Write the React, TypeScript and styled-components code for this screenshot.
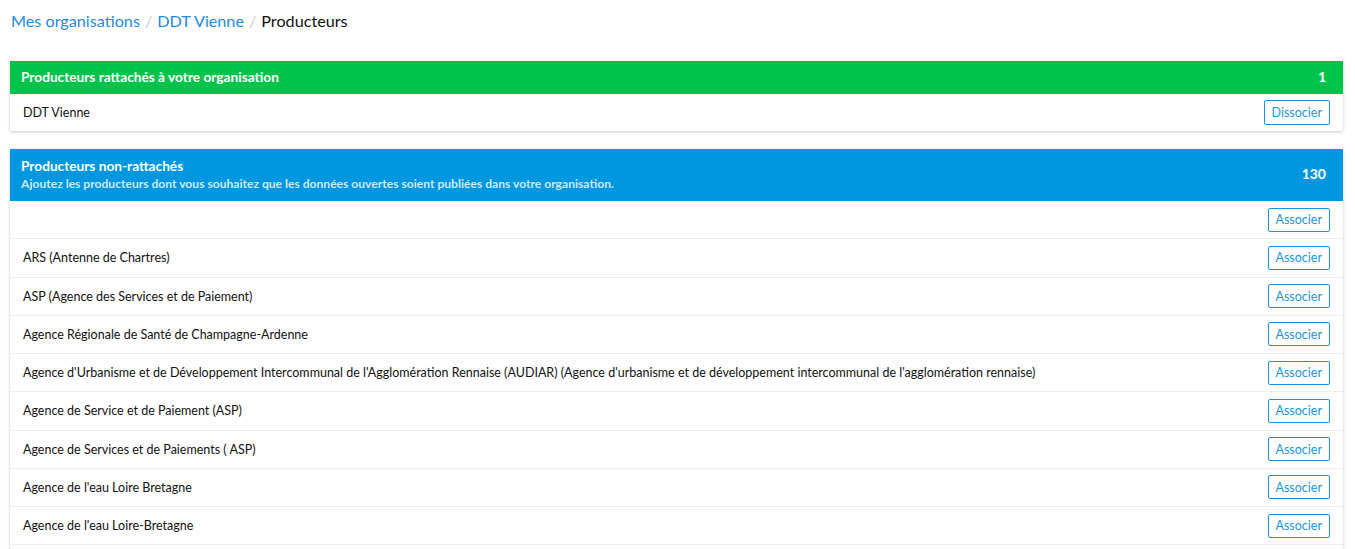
import React from "react";
import styled, { createGlobalStyle } from "styled-components";

const Global = createGlobalStyle`
  html, body { margin: 0; padding: 0; background: #fff; }
  body { font-family: Lato, "Open Sans", "Liberation Sans", sans-serif; color: #111; }
  * { box-sizing: border-box; }
`;

const Page = styled.div`
  padding: 10px 12px 0 10px;
`;

const Crumbs = styled.nav`
  display: flex;
  align-items: center;
  font-size: 16.2px;
  height: 21px;
  padding-left: 1px;
  margin-bottom: 30px;
`;

const CrumbLink = styled.a`
  color: #1f8ae0;
  text-decoration: none;
`;

const Sep = styled.span`
  color: #ccc;
  padding: 0 5px;
`;

const Current = styled.span`
  color: #111;
`;

const Panel = styled.section`
  background: #fff;
  box-shadow: 0 1px 3px rgba(0, 0, 0, 0.22);
  margin-bottom: 18px;
`;

const Header = styled.header<{ $bg: string; $tall?: boolean }>`
  background: ${(p) => p.$bg};
  color: #fff;
  display: flex;
  align-items: center;
  justify-content: space-between;
  padding: 0 17px 3px 11px;
  height: ${(p) => (p.$tall ? "52px" : "33px")};
`;

const HeadText = styled.div`
  display: flex;
  flex-direction: column;
  gap: 3px;
`;

const Title = styled.div`
  font-weight: 700;
  font-size: 13.7px;
  line-height: 17px;
`;

const Sub = styled.div`
  font-weight: 700;
  font-size: 12.1px;
  line-height: 14px;
  color: rgba(255, 255, 255, 0.82);
`;

const Count = styled.div`
  font-weight: 700;
  font-size: 14px;
`;

const Row = styled.div<{ $h: number }>`
  display: flex;
  align-items: center;
  justify-content: space-between;
  height: ${(p) => p.$h}px;
  padding: 0 13px;
  font-size: 12.5px;
  border-bottom: 1px solid #eee;
  &:last-child { border-bottom: none; }
`;

const Btn = styled.button<{ $tall?: boolean }>`
  font-family: inherit;
  font-size: 12.5px;
  color: #1a95dc;
  background: #fff;
  border: 1px solid #1a95dc;
  border-radius: 2px;
  height: ${(p) => (p.$tall ? "25px" : "24px")};
  padding: 0 7px;
  cursor: pointer;
`;

const names = [
  "",
  "ARS (Antenne de Chartres)",
  "ASP (Agence des Services et de Paiement)",
  "Agence Régionale de Santé de Champagne-Ardenne",
  "Agence d'Urbanisme et de Développement Intercommunal de l'Agglomération Rennaise (AUDIAR) (Agence d'urbanisme et de développement intercommunal de l'agglomération rennaise)",
  "Agence de Service et de Paiement (ASP)",
  "Agence de Services et de Paiements ( ASP)",
  "Agence de l'eau Loire Bretagne",
  "Agence de l'eau Loire-Bretagne",
  "Agence de l'eau Seine-Normandie",
];

export default function App() {
  return (
    <>
      <Global />
      <Page>
        <Crumbs>
          <CrumbLink href="#">Mes organisations</CrumbLink>
          <Sep>/</Sep>
          <CrumbLink href="#">DDT Vienne</CrumbLink>
          <Sep>/</Sep>
          <Current>Producteurs</Current>
        </Crumbs>

        <Panel>
          <Header $bg="#00c34a">
            <Title>Producteurs rattachés à votre organisation</Title>
            <Count>1</Count>
          </Header>
          <Row $h={37}>
            <span>DDT Vienne</span>
            <Btn $tall>Dissocier</Btn>
          </Row>
        </Panel>

        <Panel>
          <Header $bg="#0096e0" $tall>
            <HeadText>
              <Title>Producteurs non-rattachés</Title>
              <Sub>Ajoutez les producteurs dont vous souhaitez que les données ouvertes soient publiées dans votre organisation.</Sub>
            </HeadText>
            <Count>130</Count>
          </Header>
          {names.map((n, i) => (
            <Row key={i} $h={38.25}>
              <span>{n}</span>
              <Btn>Associer</Btn>
            </Row>
          ))}
        </Panel>
      </Page>
    </>
  );
}
